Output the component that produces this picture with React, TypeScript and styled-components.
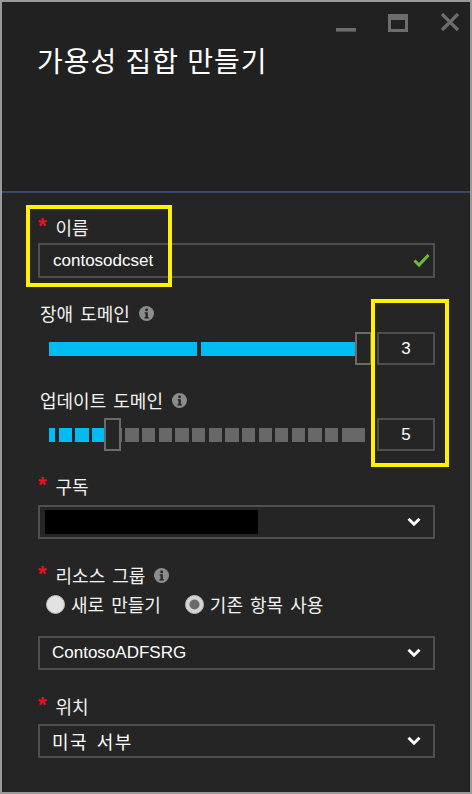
import React from "react";
import styled, { createGlobalStyle } from "styled-components";

const GlobalStyle = createGlobalStyle`
  html, body { margin: 0; padding: 0; background: #252525; }
  body {
    font-family: "Liberation Sans", "Noto Sans CJK KR", sans-serif;
    -webkit-font-smoothing: antialiased;
  }
  * { box-sizing: border-box; }
`;

const Frame = styled.div`
  width: 472px;
  height: 794px;
  border: 2px solid #9a9a9a;
  background: #252525;
  display: flex;
  flex-direction: column;
  overflow: hidden;
`;

const Header = styled.header`
  flex: 0 0 191px;
  background: #212121;
  border-bottom: 2px solid #354a6d;
  padding: 11px 10px 0 35px;
  display: flex;
  flex-direction: column;
`;

const Controls = styled.div`
  display: flex;
  justify-content: flex-end;
  gap: 32px;
  height: 20px;
`;

const Title = styled.h1`
  margin: 9px 0 0 0;
  font-family: "Noto Sans CJK KR", sans-serif;
  font-weight: 400;
  font-size: 28px;
  line-height: 36px;
  letter-spacing: 1px;
  word-spacing: 1px;
  color: #ffffff;
`;

const Body = styled.main`
  flex: 1;
  position: relative;
  padding: 24px 35px 0 36px;
  display: flex;
  flex-direction: column;
`;

const Ko = styled.span<{ $ls?: number }>`
  font-family: "Noto Sans CJK KR", sans-serif;
  font-size: 18px;
  letter-spacing: ${(p) => p.$ls ?? 0}px;
  word-spacing: 3px;
`;

const Label = styled.div<{ $mt: number; $star?: boolean }>`
  display: flex;
  align-items: center;
  height: 20px;
  margin-top: ${(p) => p.$mt}px;
  margin-bottom: 2px;
  padding-left: ${(p) => (p.$star ? 0 : 2)}px;
  font-size: 17px;
  line-height: 20px;
  color: #f2f2f2;
  white-space: nowrap;
`;

const Star = styled.span`
  display: block;
  align-self: flex-start;
  height: 20px;
  color: #e81123;
  font-weight: 700;
  font-size: 22px;
  line-height: 22px;
  margin: -2px 9px 0 0;
`;

const Info = styled.svg`
  margin-left: 9px;
  flex-shrink: 0;
`;

const Input = styled.div`
  margin-top: 4px;
  height: 35px;
  border: 2px solid #4f4f4f;
  display: flex;
  align-items: center;
  justify-content: space-between;
  padding: 0 3px 0 13px;
  font-size: 17px;
  color: #ffffff;
`;

const SliderRow = styled.div<{ $mt: number }>`
  margin-top: ${(p) => p.$mt}px;
  display: flex;
  align-items: center;
  gap: 5px;
  padding-left: 11px;
  height: 33px;
`;

const Track = styled.div`
  position: relative;
  flex: 1;
  height: 33px;
  display: flex;
  align-items: center;
`;

const Bar = styled.div<{ $gap: number }>`
  display: flex;
  gap: ${(p) => p.$gap}px;
  height: 14px;
`;

const Seg = styled.div<{ $on: boolean }>`
  height: 14px;
  flex-shrink: 0;
  background: ${(p) => (p.$on ? "#00bcf2" : "#686868")};
`;

const Thumb = styled.div`
  position: absolute;
  top: 0;
  width: 17px;
  height: 33px;
  border: 2px solid #6b6b6b;
  background: #252525;
`;

const NumBox = styled.div`
  flex: 0 0 58px;
  height: 33px;
  border: 2px solid #4f4f4f;
  display: flex;
  align-items: center;
  justify-content: center;
  font-size: 17px;
  color: #ffffff;
`;

const Select = styled.div<{ $mt: number; $inset?: number }>`
  margin-top: ${(p) => p.$mt}px;
  height: 34px;
  border: 2px solid #4f4f4f;
  display: flex;
  align-items: center;
  justify-content: space-between;
  padding: 0 12px 0 ${(p) => p.$inset ?? 12}px;
  font-size: 17px;
  color: #ffffff;
`;

const Redacted = styled.div`
  width: 213px;
  height: 24px;
  background: #000000;
`;

const RadioRow = styled.div`
  margin-top: 7px;
  display: flex;
  align-items: center;
  height: 20px;
  padding-left: 8px;
`;

const RadioOption = styled.label`
  display: flex;
  align-items: center;
  gap: 6px;
  margin-right: 24px;
  line-height: 20px;
  color: #f2f2f2;
`;

const Annotation = styled.div<{ $l: number; $t: number; $w: number; $h: number }>`
  position: absolute;
  left: ${(p) => p.$l}px;
  top: ${(p) => p.$t}px;
  width: ${(p) => p.$w}px;
  height: ${(p) => p.$h}px;
  border: 4px solid #fff200;
  pointer-events: none;
`;

const InfoIcon = () => (
  <Info width="15" height="15" viewBox="0 0 15 15">
    <circle cx="7.5" cy="7.5" r="7.5" fill="#8c8c8c" />
    <circle cx="7.6" cy="3.9" r="1.4" fill="#252525" />
    <path d="M5.6 6.3 H8.8 V11.2 H9.9 V12.4 H5.4 V11.2 H6.5 V7.5 H5.6 Z" fill="#252525" />
  </Info>
);

const Chevron = () => (
  <svg width="14" height="10" viewBox="0 0 14 10">
    <polyline points="1.5,1.8 7,7.2 12.5,1.8" fill="none" stroke="#ffffff" strokeWidth="3" />
  </svg>
);

const Radio = ({ checked }: { checked?: boolean }) => (
  <svg width="19" height="19" viewBox="0 0 19 19">
    <circle cx="9.5" cy="9.5" r="9" fill={checked ? "#d4d4d4" : "#e2e2e2"} stroke="#bdbdbd" strokeWidth="1" />
    {checked && <circle cx="9.5" cy="9.5" r="5" fill="#6a6a6a" />}
  </svg>
);

const updateWidths: number[] = [
  6.3,
  ...Array.from({ length: 17 }, () => 13.33),
  23.3,
];

export default function App() {
  return (
    <>
      <GlobalStyle />
      <Frame>
        <Header>
          <Controls>
            <svg width="20" height="20" viewBox="0 0 20 20">
              <rect x="0" y="15" width="20" height="3.6" fill="#6d6d6d" />
            </svg>
            <svg width="20" height="20" viewBox="0 0 20 20">
              <path d="M0 1 H20 V19 H0 Z M3 7 V16 H17 V7 Z" fill="#6d6d6d" fillRule="evenodd" />
            </svg>
            <svg width="20" height="20" viewBox="0 0 20 20">
              <path d="M2 1 L18 17 M18 1 L2 17" stroke="#6d6d6d" strokeWidth="3.2" />
            </svg>
          </Controls>
          <Title>가용성 집합 만들기</Title>
        </Header>
        <Body>
          <Label $mt={0} $star>
            <Star>*</Star>
            <Ko>이름</Ko>
          </Label>
          <Input>
            <span>contosodcset</span>
            <svg width="17" height="15" viewBox="0 0 17 15">
              <polyline points="1.5,7.5 6,12 15.5,2" fill="none" stroke="#74b83a" strokeWidth="3" />
            </svg>
          </Input>

          <Label $mt={25}>
            <Ko>장애 도메인</Ko>
            <InfoIcon />
          </Label>
          <SliderRow $mt={7}>
            <Track>
              <Bar $gap={4}>
                <Seg $on style={{ width: 148 }} />
                <Seg $on style={{ width: 171 }} />
              </Bar>
              <Thumb style={{ left: 306 }} />
            </Track>
            <NumBox>3</NumBox>
          </SliderRow>

          <Label $mt={25}>
            <Ko>업데이트 도메인</Ko>
            <InfoIcon />
          </Label>
          <SliderRow $mt={6}>
            <Track>
              <Bar $gap={3.33}>
                {updateWidths.map((w, i) => (
                  <Seg key={i} $on={i < 4} style={{ width: w }} />
                ))}
              </Bar>
              <Thumb style={{ left: 55 }} />
            </Track>
            <NumBox>5</NumBox>
          </SliderRow>

          <Label $mt={25} $star>
            <Star>*</Star>
            <Ko>구독</Ko>
          </Label>
          <Select $mt={7} $inset={5}>
            <Redacted />
            <Chevron />
          </Select>

          <Label $mt={26} $star>
            <Star>*</Star>
            <Ko>리소스 그룹</Ko>
            <InfoIcon />
          </Label>
          <RadioRow>
            <RadioOption>
              <Radio />
              <Ko>새로 만들기</Ko>
            </RadioOption>
            <RadioOption>
              <Radio checked />
              <Ko>기존 항목 사용</Ko>
            </RadioOption>
          </RadioRow>
          <Select $mt={22}>
            <span>ContosoADFSRG</span>
            <Chevron />
          </Select>

          <Label $mt={26} $star>
            <Star>*</Star>
            <Ko>위치</Ko>
          </Label>
          <Select $mt={6}>
            <Ko $ls={1.5}>미국 서부</Ko>
            <Chevron />
          </Select>

          <Annotation $l={24} $t={12} $w={146} $h={82} />
          <Annotation $l={369} $t={106} $w={78} $h={168} />
        </Body>
      </Frame>
    </>
  );
}
